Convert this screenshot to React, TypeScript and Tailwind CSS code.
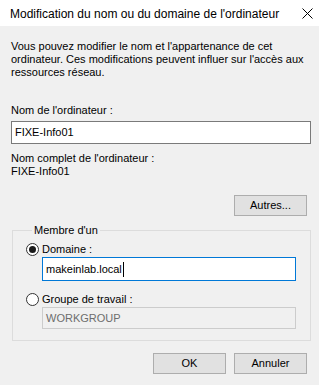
import React from "react";

const Btn = ({ label, className = "" }: { label: string; className?: string }) => (
  <button className={`h-[21px] w-[73px] border border-[#adadad] bg-[#e1e1e1] text-[11px] text-black leading-none ${className}`}>
    {label}
  </button>
);

const Radio = ({ checked, label }: { checked?: boolean; label: string }) => (
  <div className="flex items-center h-[13px]">
    <span className="w-[13px] h-[13px] rounded-full border border-[#333333] bg-white flex items-center justify-center">
      {checked && <span className="w-[7px] h-[7px] rounded-full bg-[#1a1a1a]" />}
    </span>
    <span className="ml-[3px] leading-[13px]">{label}</span>
  </div>
);

const App = () => {
  return (
    <div className="w-[319px] h-[385px] bg-[#f0f0f0] text-[11px] text-black font-['Liberation_Sans',Arial,sans-serif] overflow-hidden">
      <div className="h-[26px] bg-white flex items-center justify-between pl-[10px] pr-[6px]">
        <span className="text-[12px] pt-[2px]">Modification du nom ou du domaine de l'ordinateur</span>
        <svg width="11" height="11" viewBox="0 0 11 11" className="mt-[1px]">
          <path d="M0.5 0.5 L10.5 10.5 M10.5 0.5 L0.5 10.5" stroke="#000" strokeWidth="1" />
        </svg>
      </div>

      <div className="px-[11px]">
        <p className="mt-[14px] leading-[13px]">
          Vous pouvez modifier le nom et l'appartenance de cet
          <br />
          ordinateur. Ces modifications peuvent influer sur l'accès aux
          <br />
          ressources réseau.
        </p>

        <div className="mt-[25px] leading-[13px]">Nom de l'ordinateur :</div>
        <div className="mt-[4px] h-[23px] w-[300px] border border-[#7a7a7a] bg-white flex items-center pl-[3px]">
          FIXE-Info01
        </div>

        <div className="mt-[8px] leading-[13px]">Nom complet de l'ordinateur :</div>
        <div className="leading-[13px]">FIXE-Info01</div>

        <div className="mt-[17px] flex justify-end pr-[1px]">
          <Btn label="Autres..." />
        </div>

        <fieldset className="mt-[8px] ml-[1px] w-[299px] h-[117px] border border-[#dcdcdc] pl-[13px]">
          <legend className="ml-[6px] px-[2px] leading-[13px]">Membre d'un</legend>
          <div className="mt-[6px]">
            <Radio checked label="Domaine :" />
          </div>
          <div className="mt-[1px] ml-[16px] h-[24px] w-[254px] border border-[#0078d7] bg-white flex items-center pl-[3px]">
            <span>makeinlab.local</span>
            <span className="ml-[1px] w-[1px] h-[15px] bg-black" />
          </div>
          <div className="mt-[12px]">
            <Radio label="Groupe de travail :" />
          </div>
          <div className="mt-[1px] ml-[16px] h-[22px] w-[254px] border border-[#cccccc] bg-[#f0f0f0] text-[#6d6d6d] flex items-center pl-[3px]">
            WORKGROUP
          </div>
        </fieldset>

        <div className="mt-[12px] flex justify-end gap-[8px] pr-[1px]">
          <Btn label="OK" />
          <Btn label="Annuler" />
        </div>
      </div>
    </div>
  );
};

export default App;
